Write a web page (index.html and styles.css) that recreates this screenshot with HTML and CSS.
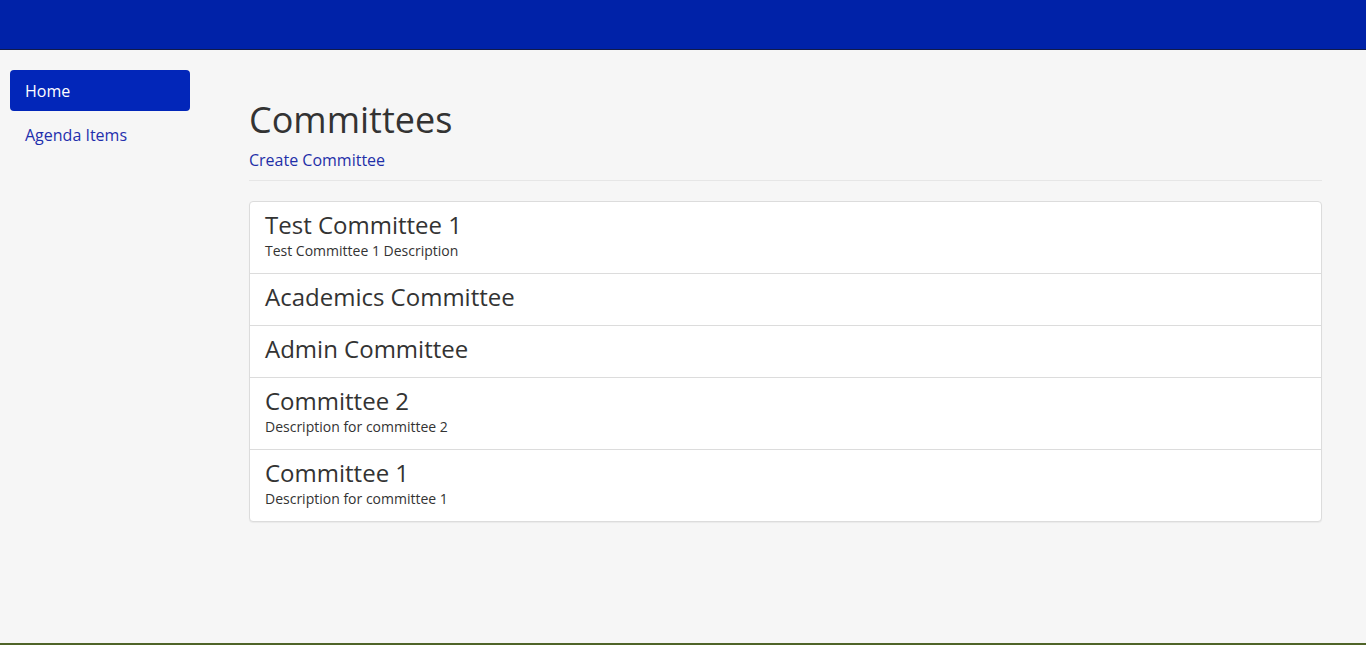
FILE: index.html
```html
<!DOCTYPE html>
<html lang="en">
<head>
<meta charset="utf-8">
<title>Committees</title>
<link rel="stylesheet" href="styles.css">
</head>
<body>
<div class="page">
  <header class="topbar"></header>
  <div class="layout">
    <nav class="sidebar">
      <a class="nav-item active" href="#">Home</a>
      <a class="nav-item" href="#">Agenda Items</a>
    </nav>
    <main class="content">
      <h1 class="title">Committees</h1>
      <a class="create-link" href="#">Create Committee</a>
      <hr class="divider">
      <ul class="list">
        <li class="list-item"><div class="item-title">Test Committee 1</div><div class="item-desc">Test Committee 1 Description</div></li>
        <li class="list-item"><div class="item-title">Academics Committee</div></li>
        <li class="list-item"><div class="item-title">Admin Committee</div></li>
        <li class="list-item"><div class="item-title">Committee 2</div><div class="item-desc">Description for committee 2</div></li>
        <li class="list-item"><div class="item-title">Committee 1</div><div class="item-desc">Description for committee 1</div></li>
      </ul>
    </main>
  </div>
  <div class="strip"></div>
</div>
</body>
</html>
```
FILE: styles.css
```css
* { box-sizing: border-box; }
html, body { margin: 0; padding: 0; }
body {
  font-family: "Open Sans", "Liberation Sans", sans-serif;
  background: #f6f6f6;
  color: #333;
  font-size: 14px;
}
.page {
  height: 100vh;
  display: flex;
  flex-direction: column;
  overflow: hidden;
}
.topbar {
  height: 50px;
  flex: 0 0 50px;
  background: #0022a8;
  border-bottom: 1px solid #111a4a;
}
.layout {
  flex: 1;
  display: flex;
}
.sidebar {
  width: 190px;
  flex: 0 0 190px;
  padding: 20px 0 0 10px;
  display: flex;
  flex-direction: column;
}
.nav-item {
  display: block;
  height: 41px;
  line-height: 39px;
  padding: 2px 15px 0;
  font-size: 16px;
  color: #1f2fad;
  text-decoration: none;
  border-radius: 4px;
}
.nav-item + .nav-item { margin-top: 3px; }
.nav-item.active {
  background: #0226b9;
  color: #fff;
}
.content {
  margin-left: 59px;
  width: 1073px;
  padding-top: 50px;
}
.title {
  font-size: 36px;
  font-weight: 400;
  line-height: 1.1;
  margin: 0 0 8px;
  color: #333;
}
.create-link {
  display: block;
  font-size: 16px;
  line-height: 24px;
  color: #1f2fa8;
  text-decoration: none;
}
.divider {
  border: 0;
  border-top: 1px solid #e6e6e6;
  margin: 8px 0 20px;
}
.list {
  list-style: none;
  margin: 0;
  padding: 0;
  background: #fff;
  border: 1px solid #dcdcdc;
  border-radius: 4px;
  box-shadow: 0 1px 1px rgba(0,0,0,0.05);
}
.list-item {
  padding: 10px 15px 15px;
  border-top: 1px solid #dcdcdc;
}
.list-item:first-child { border-top: 0; }
.item-title {
  font-size: 24px;
  line-height: 26px;
  color: #333;
}
.item-desc {
  font-size: 14px;
  line-height: 21px;
  margin-top: 2px;
  margin-bottom: -3px;
  color: #333;
}
.strip {
  height: 2px;
  flex: 0 0 2px;
  background: #4f6428;
}
```
